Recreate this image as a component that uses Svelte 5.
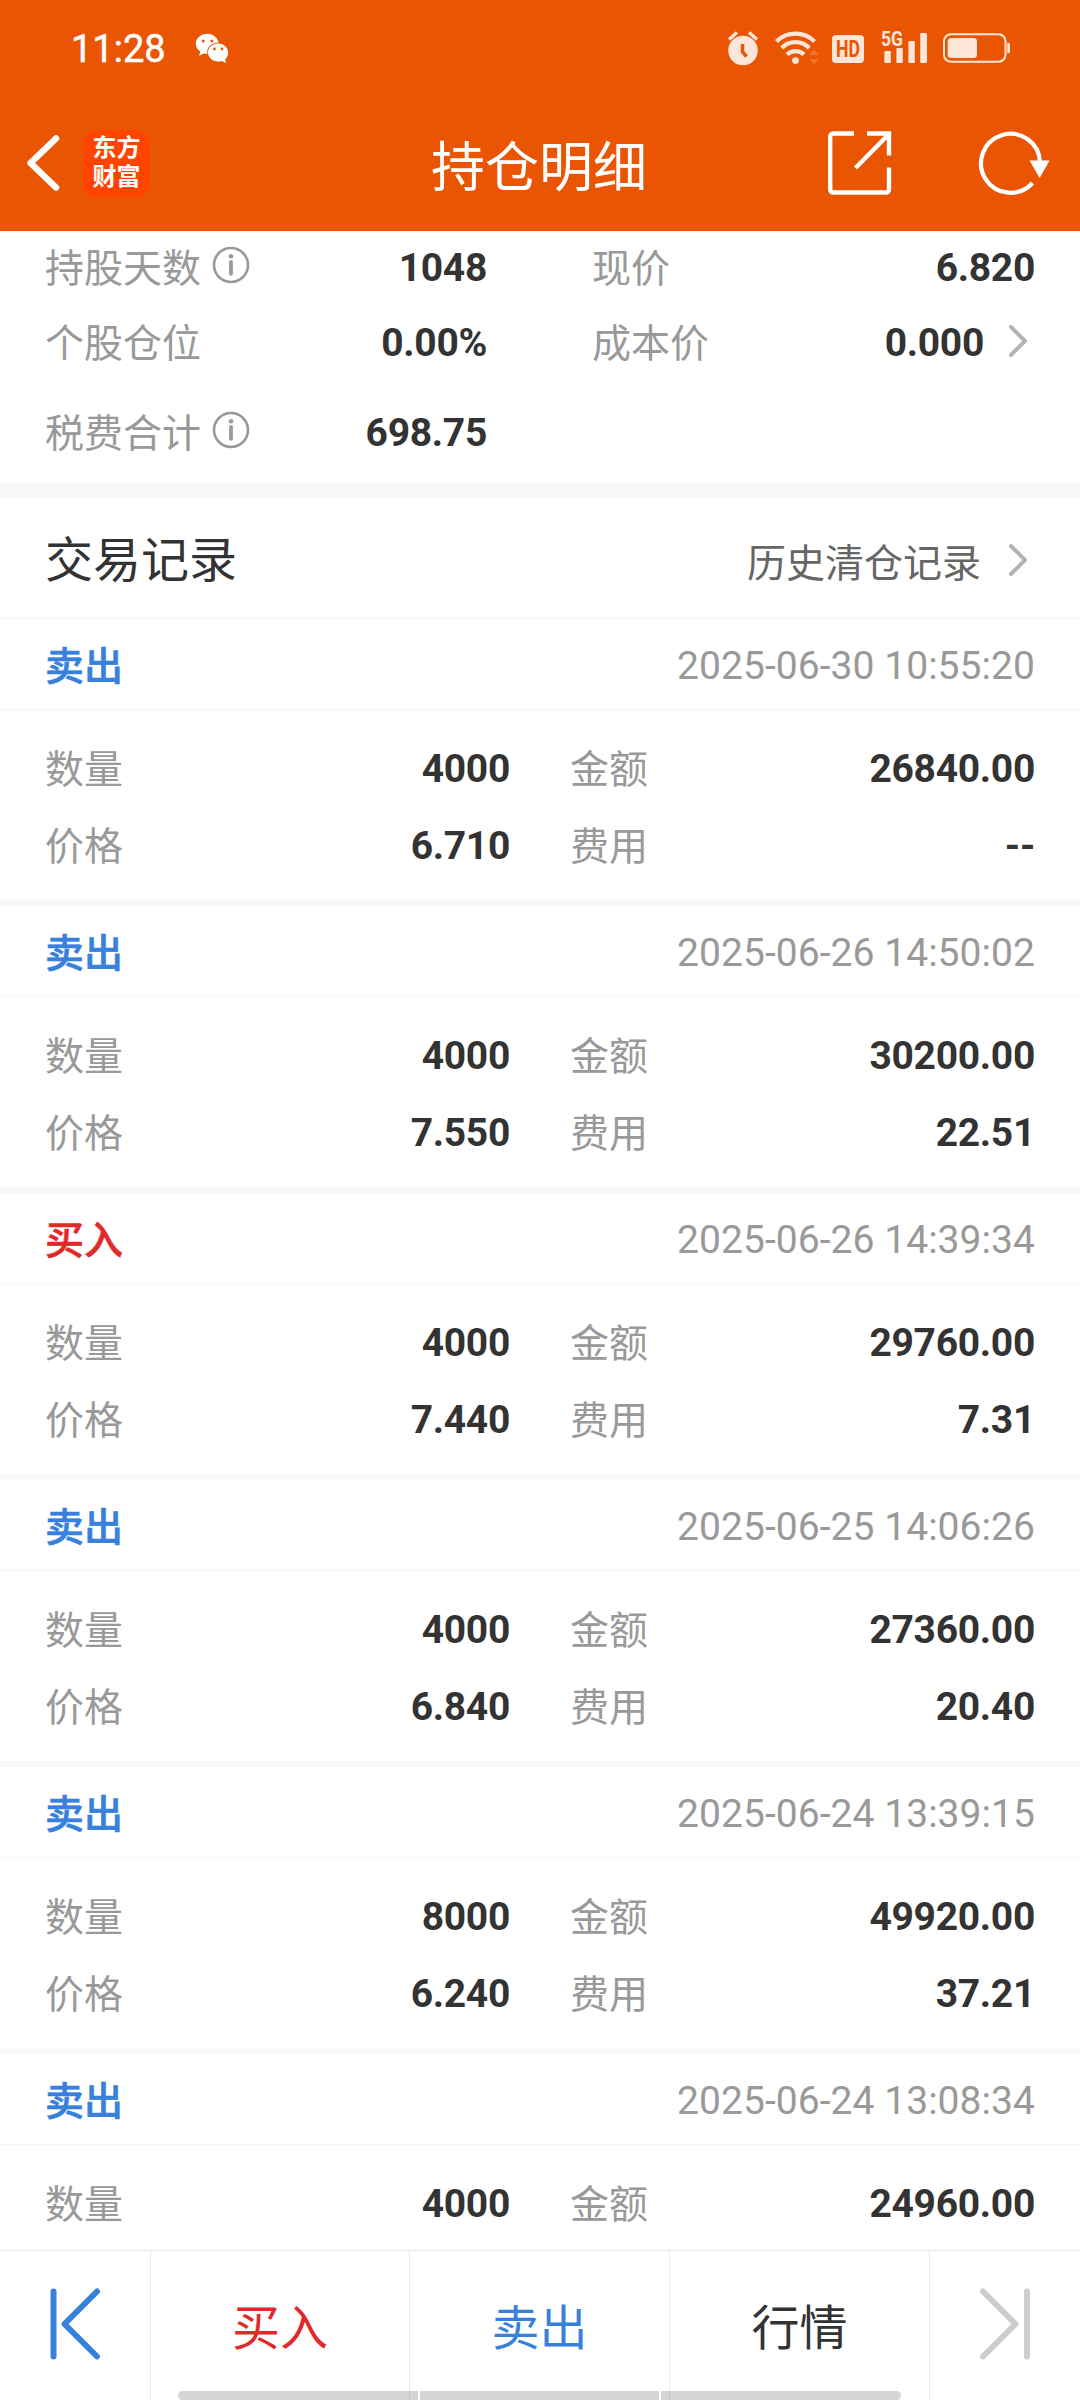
<script>
  const records = [
    { side: 'sell', time: '2025-06-30 10:55:20', qty: '4000', amount: '26840.00', price: '6.710', fee: '--' },
    { side: 'sell', time: '2025-06-26 14:50:02', qty: '4000', amount: '30200.00', price: '7.550', fee: '22.51' },
    { side: 'buy', time: '2025-06-26 14:39:34', qty: '4000', amount: '29760.00', price: '7.440', fee: '7.31' },
    { side: 'sell', time: '2025-06-25 14:06:26', qty: '4000', amount: '27360.00', price: '6.840', fee: '20.40' },
    { side: 'sell', time: '2025-06-24 13:39:15', qty: '8000', amount: '49920.00', price: '6.240', fee: '37.21' },
    { side: 'sell', time: '2025-06-24 13:08:34', qty: '4000', amount: '24960.00' }
  ];
</script>

{#snippet info()}
  <svg class="info" width="38" height="38" viewBox="0 0 38 38">
    <circle cx="19" cy="19" r="17" fill="none" stroke="#999" stroke-width="2.6" />
    <circle cx="19" cy="10.3" r="2.3" fill="#999" />
    <path d="M19 15.8v12" stroke="#999" stroke-width="3.8" stroke-linecap="round" />
  </svg>
{/snippet}

{#snippet chevron()}
  <svg class="chevron" width="20" height="34" viewBox="0 0 20 34">
    <path d="M3 3l14 14L3 31" fill="none" stroke="#b3b3b3" stroke-width="4" stroke-linecap="round" stroke-linejoin="round" />
  </svg>
{/snippet}

<div class="screen">
  <header>
    <div class="status">
      <span class="clock">11:28</span>
      <svg class="wechat" width="34" height="30" viewBox="0 0 34 30">
        <path fill="#fff" d="M12.3.8C5.9.8.8 5.2.8 10.8c0 3.200 1.700 6 4.400 7.800L4.200 23l4.500-2.400c1.200.3 2.400.4 3.700.4-1.300-6.300 4-11.500 11.200-11.500C22.500 4.600 17.900.8 12.300.8z" />
        <path fill="#fff" d="M33.200 19.600c0-5-4.500-9-10.100-9s-10.100 4-10.100 9 4.500 9 10.100 9c1.300 0 2.500-.2 3.600-.6l4.300 2.100-1-3.600c2-1.700 3.200-4.200 3.200-6.900z" />
        <g fill="#e95502">
          <circle cx="8.200" cy="8" r="1.500" /><circle cx="16.800" cy="8" r="1.500" />
          <circle cx="19.500" cy="16" r="1.400" /><circle cx="27" cy="16" r="1.400" />
        </g>
      </svg>
      <svg class="tray" width="286" height="48" viewBox="0 -10 286 48">
        <g fill="#fde5d8">
          <circle cx="16" cy="20.500" r="14.800" />
          <path d="M2 9.500l8-7M30 9.500l-8-7" stroke="#fde5d8" stroke-width="3.400" />
          <path d="M15.600 14v8l4 4.500" fill="none" stroke="#e95502" stroke-width="3.400" />
          <g fill="none" stroke="#fde5d8" stroke-width="4.300">
            <path d="M49.500 11.500a27 27 0 0 1 38 0" />
            <path d="M54.800 18a19 19 0 0 1 27.400 0" />
            <path d="M60 24.600a12 12 0 0 1 17 0" />
          </g>
          <circle cx="68.500" cy="30.600" r="3.400" />
          <path d="M82 25l5-5.500 5 5.500zM82 29l5 5.500 5-5.500z" fill="#f2722c" />
          <rect x="105" y="5" width="32" height="28" rx="4" />
          <rect x="157.400" y="21" width="6.400" height="12" rx="1" />
          <rect x="169.400" y="18" width="6.400" height="15" rx="1" />
          <rect x="181.400" y="11" width="6.400" height="22" rx="1" />
          <rect x="193.200" y="3" width="6.800" height="30" rx="1" />
          <rect x="217" y="4.200" width="61.500" height="27.600" rx="7" fill="none" stroke="#fde5d8" stroke-width="2" />
          <rect x="220.700" y="8" width="29.300" height="20" rx="3.500" />
          <path d="M280.300 12.500q2.700 0 2.700 2v7q0 2-2.700 2z" />
        </g>
        <text x="121" y="27.300" text-anchor="middle" class="hd" textLength="24" lengthAdjust="spacingAndGlyphs">HD</text>
        <text x="154" y="16" class="fiveg" textLength="22" lengthAdjust="spacingAndGlyphs">5G</text>
      </svg>
    </div>
    <div class="nav">
      <div class="left">
        <svg width="36" height="58" viewBox="0 0 36 58">
          <path d="M31 4.500L5.500 29 31 53.500" fill="none" stroke="#fff" stroke-width="6.500" stroke-linecap="round" stroke-linejoin="round" />
        </svg>
        <div class="logo"><span>东方</span><span>财富</span></div>
      </div>
      <h1>持仓明细</h1>
      <div class="right">
        <svg width="64" height="64" viewBox="0 0 64 64" fill="none" stroke="#fff" stroke-width="4.400">
          <path d="M26 2.500H5.200a3 3 0 0 0-3 3V58.500a3 3 0 0 0 3 3H58a3 3 0 0 0 3-3V36.500M39 2.500H61V24.500M27.500 37L60 4" />
        </svg>
        <svg width="72" height="66" viewBox="0 0 72 66">
          <path d="M54.500 53A29.500 29.500 0 1 1 62 32" fill="none" stroke="#fff" stroke-width="4.300" />
          <path d="M51.500 30.500h20L61.700 48z" fill="#fff" />
        </svg>
      </div>
    </div>
  </header>

  <main>
    <section class="summary">
      <div class="line">
        <span class="label">持股天数{@render info()}</span><b>1048</b>
        <span class="label">现价</span><b>6.820</b>
      </div>
      <div class="line second">
        <span class="label">个股仓位</span><b>0.00%</b>
        <span class="label">成本价</span><b>0.000{@render chevron()}</b>
      </div>
      <div class="line third">
        <span class="label">税费合计{@render info()}</span><b>698.75</b>
      </div>
    </section>

    <div class="title-row">
      <h2>交易记录</h2>
      <span class="history">历史清仓记录{@render chevron()}</span>
    </div>

    {#each records as r}
      <article>
        <div class="head">
          <strong class={r.side}>{r.side === 'buy' ? '买入' : '卖出'}</strong>
          <time>{r.time}</time>
        </div>
        <div class="body">
          <span class="label">数量</span><b>{r.qty}</b>
          <span class="label">金额</span><b>{r.amount}</b>
          {#if r.price}
            <span class="label">价格</span><b>{r.price}</b>
            <span class="label">费用</span><b>{r.fee}</b>
          {/if}
        </div>
      </article>
    {/each}
  </main>

  <footer>
    <div class="cell">
      <svg width="52" height="72" viewBox="0 0 52 72" fill="none" stroke="#3781dd" stroke-width="6" stroke-linecap="round" stroke-linejoin="round">
        <path d="M4.500 3.500v65M48 3.500L15.500 36 48 68.500" />
      </svg>
    </div>
    <div class="cell buy">买入</div>
    <div class="cell sell">卖出</div>
    <div class="cell">行情</div>
    <div class="cell">
      <svg width="52" height="72" viewBox="0 0 52 72" fill="none" stroke="#ccc" stroke-width="6" stroke-linecap="round" stroke-linejoin="round">
        <path d="M48 3.500v65M4 3.500L36.500 36 4 68.500" />
      </svg>
    </div>
    <div class="gesture"><i></i><i></i><i></i></div>
  </footer>
</div>

<style>
  :global(body) {
    margin: 0;
    background: #fff;
  }
  .screen {
    width: 1080px;
    height: 2400px;
    overflow: hidden;
    display: flex;
    flex-direction: column;
    background: #fff;
    color: #333;
    font-family: Roboto, 'Noto Sans CJK SC', sans-serif;
    font-size: 39px;
    line-height: 46px;
  }
  svg {
    display: block;
    flex: none;
  }
  header {
    height: 231px;
    flex: none;
    background: #e95502;
    color: #fff;
  }
  .status {
    display: flex;
    height: 66px;
    padding: 30px 67px 0 71px;
    box-sizing: border-box;
  }
  .clock {
    width: 124px;
    font-size: 38px;
    font-weight: 400;
    line-height: 38px;
    -webkit-text-stroke: 0.5px #fff;
  }
  .wechat {
    margin-top: 3px;
  }
  .tray {
    margin: -10px 0 0 auto;
  }
  .hd {
    font: 700 23px Roboto, sans-serif;
    fill: #e95502;
  }
  .fiveg {
    font: 700 21px Roboto, sans-serif;
    fill: #fde5d8;
  }
  .nav {
    display: grid;
    grid-template-columns: 1fr auto 1fr;
    align-items: center;
    height: 130px;
    margin-top: 32px;
    padding: 0 30px 0 25px;
  }
  .left,
  .right {
    display: flex;
    align-items: center;
  }
  .right {
    justify-content: flex-end;
    gap: 86px;
  }
  .logo {
    display: flex;
    flex-direction: column;
    align-items: center;
    justify-content: center;
    width: 67px;
    height: 67px;
    margin-left: 22px;
    border-radius: 13px;
    background: #ff4400;
    font-size: 24px;
    font-weight: 700;
    line-height: 29px;
  }
  h1 {
    margin: 11px 0 0 3px;
    font-size: 54px;
    font-weight: 400;
    line-height: 64px;
  }
  main {
    flex: 1;
    min-height: 0;
    overflow: hidden;
  }
  .summary {
    height: 252px;
    border-bottom: 15px solid #f6f8fa;
  }
  .line {
    display: grid;
    grid-template-columns: 241px 201px 346px 1fr;
    align-items: center;
    height: 74px;
    padding: 0 45px;
  }
  .line > .label:nth-of-type(2) {
    padding-left: 105px;
  }
  .second {
    height: 76px;
  }
  .third {
    height: 76px;
    margin-top: 14px;
  }
  .label {
    display: flex;
    align-items: center;
    padding-top: 1px;
    color: #999;
  }
  .info {
    margin: -7px 0 0 11px;
  }
  b {
    display: flex;
    align-items: center;
    justify-content: flex-end;
    font-weight: 700;
    letter-spacing: -0.3px;
  }
  .chevron {
    margin: -5px 7px 0 24px;
  }
  .title-row {
    display: flex;
    align-items: center;
    justify-content: space-between;
    height: 121px;
    padding: 6px 45px 0;
    box-sizing: border-box;
    border-bottom: 1px solid #f5f5f5;
  }
  h2 {
    margin: 0;
    font-size: 48px;
    font-weight: 400;
    line-height: 56px;
  }
  .history {
    display: flex;
    align-items: center;
    margin-top: 5px;
    color: #666;
  }
  .history .chevron {
    margin: -7px 7px 0 27px;
  }
  article {
    border-bottom: 6px solid #f6f8fa;
  }
  .head {
    display: flex;
    align-items: center;
    justify-content: space-between;
    height: 91px;
    padding: 4px 45px 0;
    box-sizing: border-box;
    border-bottom: 1px solid #f5f5f5;
  }
  .head strong {
    padding-top: 1px;
    font-weight: 500;
    -webkit-text-stroke: 0.6px currentColor;
  }
  .head time {
    color: #999;
    letter-spacing: 0.05px;
  }
  .buy {
    color: #e02a2a;
  }
  .sell {
    color: #3781dd;
  }
  .body {
    display: grid;
    grid-template-columns: 155px 310px 215px 1fr;
    grid-auto-rows: 77px;
    align-items: center;
    height: 190px;
    padding: 20px 45px 0;
    box-sizing: border-box;
  }
  .body .label {
    padding-top: 2px;
  }
  .body .label:nth-of-type(even) {
    padding-left: 60px;
  }
  footer {
    position: relative;
    display: grid;
    grid-template-columns: 151px 259px 260px 260px 1fr;
    flex: none;
    height: 150px;
    box-sizing: border-box;
    border-top: 1px solid #e8e8e8;
    background: #fff;
    font-size: 48px;
    line-height: 56px;
  }
  .cell {
    display: flex;
    align-items: center;
    justify-content: center;
    padding-top: 6px;
    border-right: 1px solid #ebebeb;
  }
  .cell:first-child,
  .cell:nth-child(5) {
    padding-top: 0;
    padding-bottom: 3px;
  }
  .cell:nth-child(5) {
    border-right: 0;
  }
  /* System gesture bar floating over the bottom edge */
  .gesture {
    position: absolute;
    left: 178px;
    right: 179px;
    bottom: 0;
    display: flex;
    gap: 2px;
    height: 9px;
    border-radius: 5px;
    overflow: hidden;
  }
  .gesture i {
    flex: 1;
    background: rgba(0, 0, 0, 0.165);
  }
</style>
